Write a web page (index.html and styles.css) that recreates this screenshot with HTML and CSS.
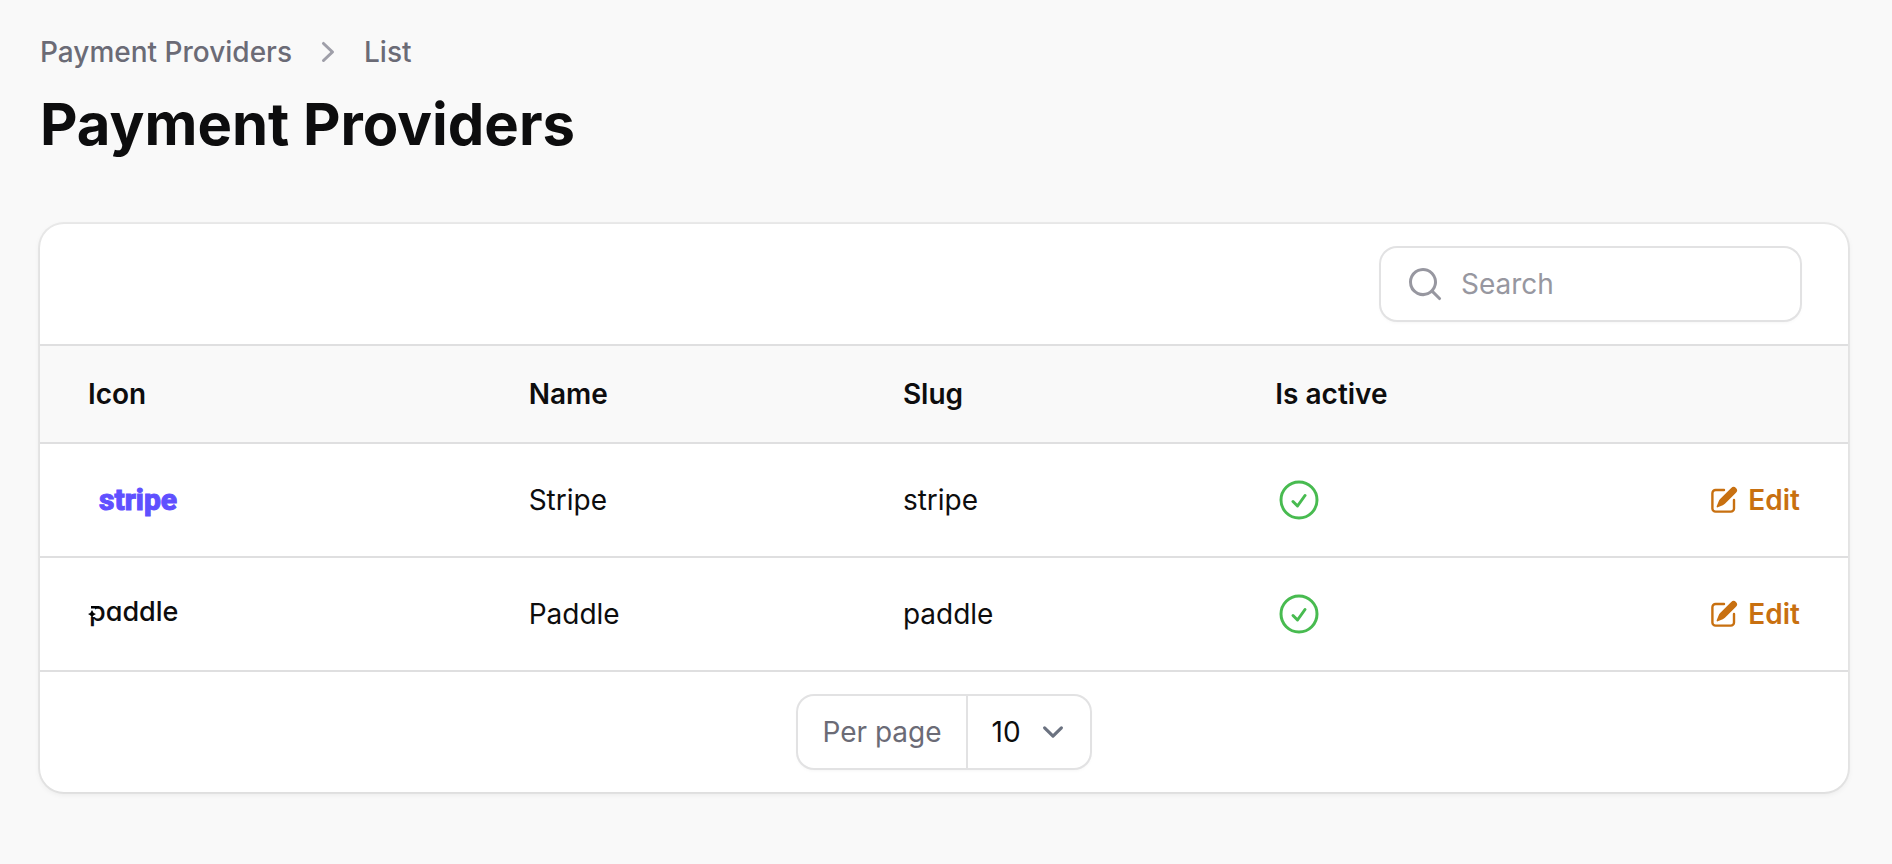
FILE: index.html
```html
<!DOCTYPE html>
<html lang="en">
<head>
<meta charset="utf-8">
<title>Payment Providers</title>
<link rel="stylesheet" href="styles.css">
</head>
<body>
<svg class="sprite" aria-hidden="true">
  <symbol id="check-circle" viewBox="0 0 24 24"><path fill="none" stroke="currentColor" stroke-width="1.5" stroke-linecap="round" stroke-linejoin="round" d="M9 12.75 11.25 15 15 9.75M21 12a9 9 0 1 1-18 0 9 9 0 0 1 18 0Z"/></symbol>
  <symbol id="pencil-square" viewBox="0 0 20 20"><path fill="currentColor" d="m5.433 13.917 1.262-3.155A4 4 0 0 1 7.58 9.42l6.92-6.918a2.121 2.121 0 0 1 3 3l-6.92 6.918c-.383.383-.84.685-1.343.886l-3.154 1.262a.5.5 0 0 1-.65-.65Z"/><path fill="currentColor" d="M3.5 5.75c0-.69.56-1.25 1.25-1.25H10A.75.75 0 0 0 10 3H4.75A2.75 2.75 0 0 0 2 5.75v9.5A2.75 2.75 0 0 0 4.75 18h9.5A2.75 2.75 0 0 0 17 15.25V10a.75.75 0 0 0-1.5 0v5.25c0 .69-.56 1.25-1.25 1.25h-9.5c-.69 0-1.25-.56-1.25-1.25v-9.5Z"/></symbol>
</svg>
<main class="page">
  <header class="page-header">
    <nav class="breadcrumbs" aria-label="Breadcrumb">
      <a href="#">Payment Providers</a>
      <svg class="crumb-separator" viewBox="0 0 20 20" aria-hidden="true"><path fill="currentColor" fill-rule="evenodd" d="M7.21 14.77a.75.75 0 0 1 .02-1.06L11.168 10 7.23 6.29a.75.75 0 1 1 1.04-1.08l4.5 4.25a.75.75 0 0 1 0 1.08l-4.5 4.25a.75.75 0 0 1-1.06-.02Z"/></svg>
      <a href="#">List</a>
    </nav>
    <h1 class="page-title">Payment Providers</h1>
  </header>

  <section class="card">
    <div class="toolbar">
      <label class="search">
        <svg class="search-icon" viewBox="0 0 20 20" aria-hidden="true"><path fill="currentColor" fill-rule="evenodd" d="M9 3.5a5.5 5.5 0 1 0 0 11 5.5 5.5 0 0 0 0-11ZM2 9a7 7 0 1 1 12.452 4.391l3.328 3.329a.75.75 0 1 1-1.06 1.06l-3.329-3.328A7 7 0 0 1 2 9Z"/></svg>
        <input class="search-input" type="search" placeholder="Search" aria-label="Search">
      </label>
    </div>

    <table class="providers">
      <colgroup><col class="col-icon"><col class="col-name"><col class="col-slug"><col><col></colgroup>
      <thead>
        <tr><th scope="col">Icon</th><th scope="col">Name</th><th scope="col">Slug</th><th scope="col">Is active</th><th scope="col" aria-label="Actions"></th></tr>
      </thead>
      <tbody>
        <tr>
          <td><svg class="logo" viewBox="0 0 96 48" role="img" aria-label="stripe"><text class="stripe-wordmark" x="11" y="34">stripe</text></svg></td>
          <td>Stripe</td>
          <td>stripe</td>
          <td><svg class="status" role="img" aria-label="Active"><use href="#check-circle"/></svg></td>
          <td><a class="edit" href="#"><svg class="edit-icon" aria-hidden="true"><use href="#pencil-square"/></svg>Edit</a></td>
        </tr>
        <tr>
          <td><svg class="logo" viewBox="0 0 96 48" role="img" aria-label="paddle"><text class="paddle-wordmark" x="1" y="31">paddle</text><path fill="#fff" d="M0 14h7v13H0z"/><path d="M3 16h8v2.500H3zM4 20q.8 3 4 4-3.200 1-4 4-.8-3-4-4 3.200-1 4-4z"/></svg></td>
          <td>Paddle</td>
          <td>paddle</td>
          <td><svg class="status" role="img" aria-label="Active"><use href="#check-circle"/></svg></td>
          <td><a class="edit" href="#"><svg class="edit-icon" aria-hidden="true"><use href="#pencil-square"/></svg>Edit</a></td>
        </tr>
      </tbody>
    </table>

    <footer class="pagination">
      <div class="per-page">
        <label class="per-page-label" for="per-page">Per page</label>
        <div class="select-wrap">
          <select class="per-page-select" id="per-page"><option>10</option></select>
          <svg class="select-arrow" viewBox="0 0 20 20" aria-hidden="true"><path fill="none" stroke="currentColor" stroke-width="1.5" stroke-linecap="round" stroke-linejoin="round" d="m6 8 4 4 4-4"/></svg>
        </div>
      </div>
    </footer>
  </section>
</main>
</body>
</html>
```
FILE: styles.css
```css
* {
  box-sizing: border-box;
}

body {
  margin: 0;
  background: #f9f9f9;
  color: #0d0d0e;
  font-family: Inter, "Liberation Sans", sans-serif;
  font-size: 28px;
  line-height: 40px;
}

a {
  color: inherit;
  text-decoration: none;
}

svg {
  display: block;
}

.sprite {
  position: absolute;
  width: 0;
  height: 0;
}

.page {
  display: flex;
  flex-direction: column;
  gap: 64px;
  padding: 32px 44px 32px 40px;
}

.page-header {
  display: flex;
  flex-direction: column;
  gap: 16px;
}

.breadcrumbs {
  display: flex;
  align-items: center;
  gap: 16px;
  color: #6b6b76;
  font-weight: 500;
}

.crumb-separator {
  width: 40px;
  height: 40px;
  color: #9f9fa9;
}

.page-title {
  margin: 0;
  font-size: 58px;
  font-weight: 700;
  line-height: 72px;
}

.card {
  border-radius: 24px;
  background: #fff;
  box-shadow: 0 0 0 2px rgba(9, 9, 11, 0.06), 0 2px 6px rgba(0, 0, 0, 0.08);
}

.toolbar {
  display: flex;
  justify-content: flex-end;
  padding: 24px 48px;
}

.search {
  display: flex;
  align-items: center;
  gap: 16px;
  width: 419px;
  height: 72px;
  padding: 0 24px;
  border-radius: 16px;
  color: #9797a0;
  box-shadow: 0 0 0 2px #e2e2e3, 0 2px 4px rgba(0, 0, 0, 0.06);
}

.search-icon {
  flex: none;
  width: 40px;
  height: 40px;
}

.search-input {
  flex: 1;
  min-width: 0;
  padding: 0;
  border: 0;
  outline: 0;
  background: none;
  color: #0d0d0e;
  font: inherit;
}

.search-input::placeholder {
  color: #9797a0;
  opacity: 1;
}

.providers {
  width: 100%;
  table-layout: fixed;
  border-collapse: separate;
  border-spacing: 0;
  text-align: left;
}

.col-icon {
  width: 25.7%;
}

.col-name {
  width: 20.7%;
}

.col-slug {
  width: 20.6%;
}

.providers th,
.providers td {
  padding: 0 24px;
  border-top: 2px solid #dfdfe0;
}

.providers th {
  height: 98px;
  background: #f9f9f9;
  font-weight: 600;
}

.providers td {
  height: 114px;
}

.providers tr > :first-child {
  padding-left: 48px;
}

.providers tr > :last-child {
  padding-right: 48px;
}

.logo {
  width: 96px;
  height: 48px;
}

.stripe-wordmark {
  fill: #5f50ff;
  stroke: #5f50ff;
  stroke-width: 1px;
  font: 800 30px Roboto, sans-serif;
}

.paddle-wordmark {
  fill: #0d0d0e;
  font: 500 27px Inter, sans-serif;
  font-feature-settings: "cv11" 1;
}

.status {
  width: 48px;
  height: 48px;
  color: #48bb50;
}

.edit {
  display: flex;
  align-items: center;
  justify-content: flex-end;
  gap: 8px;
  color: #c87010;
  font-weight: 600;
}

.edit-icon {
  width: 32px;
  height: 32px;
}

.pagination {
  display: flex;
  justify-content: center;
  padding: 24px 48px;
  border-top: 2px solid #dfdfe0;
}

.per-page {
  display: flex;
  height: 72px;
  border-radius: 16px;
  box-shadow: 0 0 0 2px #e2e2e3, 0 2px 4px rgba(0, 0, 0, 0.06);
}

.per-page-label {
  display: flex;
  align-items: center;
  padding: 0 24px;
  border-right: 2px solid #e2e2e3;
  color: #6b6b76;
}

.select-wrap {
  position: relative;
  display: flex;
}

.per-page-select {
  padding: 0 68px 0 24px;
  border: 0;
  outline: 0;
  appearance: none;
  background: none;
  color: #0d0d0e;
  font: inherit;
}

.select-arrow {
  position: absolute;
  top: 15px;
  right: 16px;
  width: 42px;
  height: 42px;
  color: #6b7280;
  pointer-events: none;
}
```
